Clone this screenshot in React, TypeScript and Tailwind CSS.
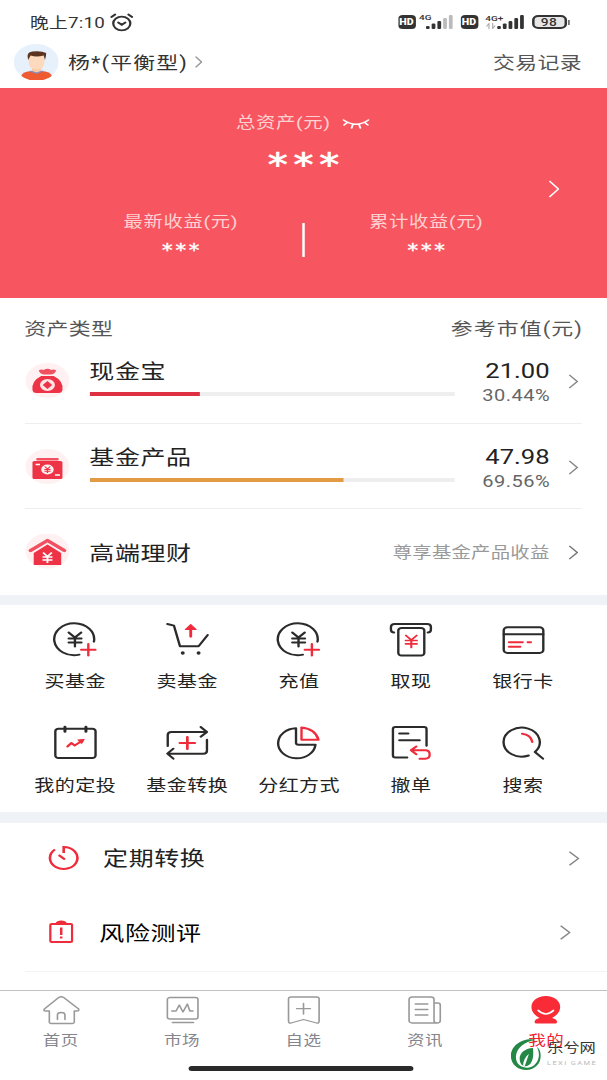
import type { ReactNode } from "react";

const DARK = "#2b2b2b";
const RED = "#ee2c3c";

export default function App() {
  return (
    <div className="h-[1080px] w-[607px] overflow-hidden bg-white">
      {/* 486pt wide phone layout, stretched to the full window */}
      <main className="flex h-[1080px] w-[486px] origin-left scale-x-[1.249] flex-col bg-white font-['Roboto','Noto_Sans_CJK_SC',sans-serif] text-[#222]">
        <StatusBar />
        <Header />
        <Summary />
        <Assets />
        <div className="h-[10px] shrink-0 bg-[#eff3f7]" />
        <section className="grid h-[207px] shrink-0 grid-cols-5 grid-rows-[103.5px_103.5px] pl-[15.5px] pr-[22.5px]">
          {actions.map((a) => (
            <div key={a.label} className="flex flex-col items-center pt-4">
              <svg viewBox="0 0 36 36" className="size-9" fill="none" stroke={DARK} strokeWidth="1.9" strokeLinecap="round" strokeLinejoin="round">
                {a.icon}
              </svg>
              <span className="mt-[13px] whitespace-nowrap text-[16px] leading-6 tracking-[0.4px]">{a.label}</span>
            </div>
          ))}
        </section>
        <div className="h-[11px] shrink-0 bg-[#eff3f7]" />
        <Services />
        <TabBar />
      </main>
    </div>
  );
}

function Chevron({ className }: { className: string }) {
  return (
    <svg viewBox="0 0 10 18" preserveAspectRatio="none" className={className} fill="none" stroke="currentColor">
      <path d="M1 1L9 9L1 17" strokeWidth="1.3" vectorEffect="non-scaling-stroke" />
    </svg>
  );
}

function Signal({ dim }: { dim: boolean }) {
  return (
    <svg viewBox="0 0 22 14" className="h-[14px] w-[22px]" fill="#333">
      <rect x="0" y="11" width="3" height="3" rx="1" />
      <rect x="4.6" y="8.5" width="3" height="5.5" rx="1" />
      <rect x="9.2" y="6" width="3" height="8" rx="1" />
      <rect x="13.8" y="3" width="3" height="11" rx="1" fill={dim ? "#bbb" : "#333"} />
      <rect x="18.4" y="0" width="3" height="14" rx="1" fill={dim ? "#bbb" : "#333"} />
    </svg>
  );
}

function HdBadge() {
  return (
    <span className="flex h-[14px] w-[14px] items-center justify-center rounded-[3.5px] bg-[#333] text-[8.5px] font-black leading-none text-white">
      HD
    </span>
  );
}

function StatusBar() {
  return (
    <div className="flex h-[44px] shrink-0 items-center pl-6 pr-[30px] text-[#333]">
      <span className="pt-[3px] text-[15px] tracking-[0.2px]">晚上7:10</span>
      <svg viewBox="0 0 20 20" className="ml-[4px] size-[19px]" fill="none" stroke="#333" strokeWidth="1.9" strokeLinecap="round">
        <circle cx="10" cy="11" r="7.2" />
        <path d="M1.3 4.2L4.4 1.6M18.7 4.2L15.6 1.6M7 10L10 12.4L13 10" />
      </svg>
      <div className="ml-auto flex items-center">
        <HdBadge />
        <span className="ml-[3px] -mt-[9px] text-[8px] font-medium leading-none">4G</span>
        <span className="-ml-[5px]"><Signal dim /></span>
        <span className="ml-[6px]"><HdBadge /></span>
        <span className="ml-[6px] flex h-[16px] w-[15px] flex-col text-[8px] font-medium leading-[9px]">
          4G+
          <svg viewBox="0 0 8 6" className="h-[6px] w-[8px]" fill="none" stroke="#aaa" strokeWidth="0.9">
            <path d="M2.500 6V.5L.5 3.500M5.500 0V5.500L7.500 2.500" />
          </svg>
        </span>
        <span className="-ml-[6px]"><Signal dim={false} /></span>
        <span className="ml-[6px] flex h-[14px] w-[28px] items-center justify-center rounded-[5px] border-2 border-[#333] bg-[#e6e6e6] text-[11px] font-medium leading-none tracking-[0.3px]">
          98
        </span>
        <span className="ml-px h-[5px] w-[1.5px] bg-[#333]" />
      </div>
    </div>
  );
}

function Header() {
  return (
    <header className="flex h-[44px] shrink-0 items-start pl-[10.5px] pr-5">
      <svg viewBox="0 0 36 36" className="size-9">
        <circle cx="18" cy="18" r="18" fill="#e7f1fb" />
        <path d="M6 32Q7 27.500 14.500 27H22Q29.500 27.500 30.500 32A18 18 0 0 1 6 32Z" fill="#ee5a32" />
        <path d="M14.500 23H22V27Q18.300 31 14.500 27Z" fill="#f7c9a9" />
        <path d="M13 27L18.200 29L23.500 27" fill="none" stroke="#7d8fc4" strokeWidth="1.200" />
        <path d="M12 11H24.500V18Q24.500 25.500 18.200 25.500T12 18Z" fill="#fdd9bd" />
        <path d="M11.500 16Q9.500 8 15 7.500Q22 6.500 26 9Q26 12 25 16L24 11.500Q18 13.500 13.500 11.500Z" fill="#5c3420" />
      </svg>
      <span className="ml-2 pt-px text-[17.500px] leading-9 tracking-[0.9px] text-[#333]">杨*(平衡型)</span>
      <Chevron className="ml-[6px] mt-3 h-[12px] w-[6px] text-[#999]" />
      <span className="ml-auto pt-px text-[17.500px] leading-9 tracking-[0.3px] text-[#555]">交易记录</span>
    </header>
  );
}

function Stars({ big }: { big?: boolean }) {
  return (
    <span
      className={
        big
          ? "-mr-[4.700px] block h-[20px] font-['DejaVu_Sans',sans-serif] text-[32px] leading-[22px] tracking-[4.700px] text-white [-webkit-text-stroke:0.7px_white]"
          : "-mr-[2.200px] block h-[12px] font-['DejaVu_Sans',sans-serif] text-[17px] leading-[17px] tracking-[2.200px] text-white [-webkit-text-stroke:0.4px_white]"
      }>
      ***
    </span>
  );
}

function Summary() {
  return (
    <section className="relative h-[210px] shrink-0 bg-[#f75660] text-[15.500px] tracking-[0.5px] text-[#ffd0d2]">
      <div className="flex h-6 items-center pl-[189px] pt-[24px] box-content">
        <span>总资产(元)</span>
        <svg viewBox="0 0 22 10" className="ml-[9px] h-[10px] w-[22px]" fill="none" stroke="#fff" strokeWidth="1.500" strokeLinecap="round">
          <path d="M1 1Q11 9.500 21 1M4 3.500L1.500 6M8.500 5.500L7.500 9M13.500 5.500L14.500 9M18 3.500L20.500 6" />
        </svg>
      </div>
      <div className="mt-[17px] flex justify-center">
        <Stars big />
      </div>
      <div className="mt-[37px] flex justify-center">
        <div className="flex w-[97px] flex-col items-center">
          <span className="whitespace-nowrap leading-6">最新收益(元)</span>
          <span className="mt-[8px]"><Stars /></span>
        </div>
        <span className="mx-[49px] mt-[13px] h-[34px] w-[1.500px] bg-white" />
        <div className="flex w-[97px] flex-col items-center">
          <span className="whitespace-nowrap leading-6">累计收益(元)</span>
          <span className="mt-[8px]"><Stars /></span>
        </div>
      </div>
      <Chevron className="absolute right-[38px] top-[92px] h-[18px] w-[9px] text-white" />
    </section>
  );
}

function Assets() {
  return (
    <section className="h-[297px] shrink-0 px-5">
      <div className="flex h-[40px] items-end justify-between pt-[2px] text-[17.500px] leading-[18px] text-[#555]">
        <span className="-ml-[0.5px] tracking-[0.3px]">资产类型</span>
        <span className="-mr-[0.800px] tracking-[0.900px]">参考市值(元)</span>
      </div>
      {assets.map((a) => (
        <div key={a.name} className="flex h-[85.500px] items-start border-b border-[#eeeeee] pt-[22px]">
          <svg viewBox="0 0 36 36" className="mt-[3px] size-9">{a.icon}</svg>
          <div className="ml-[15.500px] w-[292px]">
            <div className="text-[20px] leading-6 tracking-[0.5px]">{a.name}</div>
            <div className="mt-[8px] h-[4px] bg-[#eeeeee]">
              <div className={`h-full ${a.bar}`} style={{ width: a.percent }} />
            </div>
          </div>
          <div className="ml-auto text-right">
            <div className="text-[20.500px] leading-[23px]">{a.value}</div>
            <div className="-mr-[0.400px] text-[16px] leading-[26px] tracking-[0.400px] text-[#666]">{a.percent}</div>
          </div>
          <Chevron className="ml-[15px] mr-[3px] mt-[14px] h-[15px] w-[8px] text-[#888]" />
        </div>
      ))}
      <div className="flex h-[86px] items-center">
        <svg viewBox="0 0 36 36" className="size-9">
          <circle cx="18" cy="17" r="17.500" fill="#fff0f1" />
          <path d="M4.500 16.500L18 6.500L31.500 16.500" fill="none" stroke="#f0505f" strokeWidth="3.300" strokeLinecap="round" strokeLinejoin="round" />
          <path d="M7 19L18 10.500L29 19V31H7Z" fill="#ee3347" />
          <path d="M14.500 18.500L18 22.500L21.500 18.500M18 22.500V29M14 23H22M14 26H22" fill="none" stroke="#fff" strokeWidth="1.500" />
        </svg>
        <span className="ml-[15.500px] pt-[3px] text-[20px] tracking-[0.5px]">高端理财</span>
        <span className="ml-auto pt-[3px] text-[15.500px] tracking-[0.200px] text-[#999]">尊享基金产品收益</span>
        <Chevron className="ml-[15px] mr-[3px] h-[15px] w-[8px] text-[#777]" />
      </div>
    </section>
  );
}

function Services() {
  return (
    <section className="h-[167px] shrink-0 overflow-hidden">
      <div className="flex h-[70px] items-center pl-[37.500px] pr-[22px]">
        <svg viewBox="0 0 26 26" className="size-[26px]" fill="none" stroke={RED} strokeWidth="2.100">
          <path d="M6 4.500A11 11 0 1 0 13 2V8M9 10L14 14.500" />
        </svg>
        <span className="ml-[19px] pt-[2px] text-[20px] tracking-[0.5px]">定期转换</span>
        <Chevron className="ml-auto h-[15px] w-[9px] text-[#888]" />
      </div>
      <div className="ml-5 flex h-[79px] items-center border-b border-[#f3f3f3] pl-[19px] pr-[29px]">
        <svg viewBox="0 0 20 24" className="h-6 w-5" fill="none" stroke={RED} strokeWidth="1.800">
          <rect x="1.300" y="4" width="17.400" height="18" rx="1" />
          <path d="M6 4Q7 1.500 10 1.500T14 4Z" fill={RED} />
          <path d="M10 7.500V15M10 16.500V18.500" strokeWidth="2" />
        </svg>
        <span className="ml-[20.500px] pt-[3px] text-[20px] tracking-[0.5px] text-black">风险测评</span>
        <Chevron className="ml-auto h-[15px] w-[9px] text-[#888]" />
      </div>
    </section>
  );
}

function TabBar() {
  return (
    <nav className="relative h-[90px] shrink-0 border-t border-[#c2c2c2] bg-white">
      <div className="grid grid-cols-5">
        {tabs.map((t) => (
          <div key={t.label} className="flex flex-col items-center pt-1">
            <svg viewBox="0 0 30 30" className="size-[30px]" fill="none" stroke="#999" strokeWidth="1.300" strokeLinecap="round" strokeLinejoin="round">
              {t.icon}
            </svg>
            <span className={`mt-[5px] text-[14px] leading-5 tracking-[0.4px] ${t.active ? "text-[#f02233]" : "text-[#85858d]"}`}>
              {t.label}
            </span>
          </div>
        ))}
      </div>
      <div className="absolute left-[151px] top-[75px] h-[5px] w-[180px] rounded-full bg-[#2a2a2a]" />
      <Watermark />
    </nav>
  );
}

function Watermark() {
  return (
    <div className="absolute left-[409px] top-[48px] flex items-start">
      <svg viewBox="0 0 88 93" preserveAspectRatio="none" className="h-[31px] w-[24px]">
        <path d="M74 3C40-6 0 16 0 52C1 78 22 93 45 93C72 92 88 72 88 50C88 38 84 29 76 23C82 34 84 46 81 58C76 77 62 87 46 86C26 85 14 71 15 52C17 27 38 8 74 3Z" fill="#238845" />
        <path d="M65 27C41 28 24 43 26 62C27 73 32 80 41 82C60 82 69 60 65 27Z" fill="#238845" />
        <path d="M36 80C36 66 43 53 53 45C49 57 45 69 41 81" fill="#fff" />
      </svg>
      <div className="ml-[5px] whitespace-nowrap">
        <div className="text-[13px] leading-[18px] text-[#333]">乐兮网</div>
        <div className="mt-[2px] text-[6px] leading-[7px] tracking-[1.100px] text-[#bbb]">LEXI GAME</div>
      </div>
    </div>
  );
}

const coin: ReactNode = (
  <>
    <path d="M33.200 20.700A16 16 0 1 0 21.500 33.700" />
    <path d="M13 11.500L18 16.500L23 11.500M18 16.500V25.500M13 17.500H23.200M13 21.500H23.200" />
    <path d="M28.700 23V34.500M23 28.700H34.400" stroke={RED} />
  </>
);

const actions = [
  { label: "买基金", icon: coin },
  {
    label: "卖基金",
    icon: (
      <>
        <path d="M2 3L7.300 4.700L12.100 25.300H27L34.300 14" />
        <ellipse cx="14.300" cy="32" rx="1.600" ry="1.800" fill={DARK} stroke="none" />
        <ellipse cx="27" cy="32" rx="1.600" ry="1.800" fill={DARK} stroke="none" />
        <path d="M20.700 3.500L25 8.500H16.400Z" fill={RED} stroke={RED} strokeWidth="1" />
        <path d="M20.700 8V15.500" stroke={RED} strokeWidth="2.300" />
      </>
    ),
  },
  { label: "充值", icon: coin },
  {
    label: "取现",
    icon: (
      <>
        <path d="M4.500 11.500Q2 11.500 2 8.500V6Q2 3 5 3H31Q34 3 34 6V8.500Q34 11.500 31.500 11.500" />
        <rect x="7.900" y="7" width="20.800" height="27.500" rx="2.500" />
        <path d="M14 14.500L18.300 19L22.600 14.500M18.300 19V26.500M13.800 19.500H22.800M13.800 22.800H22.800" stroke={RED} strokeWidth="1.700" />
      </>
    ),
  },
  {
    label: "银行卡",
    icon: (
      <>
        <rect x="2.300" y="6.300" width="31.700" height="25.700" rx="3" />
        <path d="M2.300 13.300H34" />
        <path d="M6.500 21.300H17.500M21.500 21.300H24M6.500 25.700H15.500" stroke={RED} />
      </>
    ),
  },
  {
    label: "我的定投",
    icon: (
      <>
        <rect x="2.300" y="3.700" width="32.200" height="29.300" rx="2.500" />
        <path d="M10 2V6.500M26.800 2V6.500" strokeWidth="2.400" />
        <path d="M12 21.500L15.200 18L17.800 20.500L24 15.500" stroke={RED} />
        <path d="M20.500 15L25.500 14.300L23.500 18.500Z" fill={RED} stroke={RED} strokeWidth="0.800" />
      </>
    ),
  },
  {
    label: "基金转换",
    icon: (
      <>
        <path d="M2.300 21V10Q2.300 7 5.300 7H33.500M28.700 2L33.700 7L28.700 11.700" />
        <path d="M33.700 14.700V25.700Q33.700 28.700 30.700 28.700H2.300M6.800 23.700L2 28.700L6.800 33.700" />
        <path d="M18 12V24M12 18H24" stroke={RED} strokeWidth="2.200" />
      </>
    ),
  },
  {
    label: "分红方式",
    icon: (
      <>
        <path d="M16 3.300A15 15 0 1 0 31.600 19.700H18Q16 19.700 16 17.700Z" />
        <path d="M20.400 2.500V14.700H34Q31.500 4 20.400 2.500Z" stroke={RED} />
      </>
    ),
  },
  {
    label: "撤单",
    icon: (
      <>
        <path d="M15 32.500H5.600Q3.600 32.500 3.600 30.500V4Q3.600 2 5.600 2H28.500Q30.500 2 30.500 4V20.700" />
        <path d="M8.700 8.500H15.900M8.700 15.300H25" />
        <path d="M22.300 21.500L18 25.300L22.300 29.300M18 25.300H29.500Q33 25.300 33 29.500T29.500 33.700H25" stroke={RED} />
      </>
    ),
  },
  {
    label: "搜索",
    icon: (
      <>
        <path d="M22.300 30.500A14.500 14.500 0 1 1 27.300 27L33.700 33.700" />
        <path d="M17 8.700Q24 9.500 25.200 17" stroke={RED} />
      </>
    ),
  },
];

const assets = [
  {
    name: "现金宝",
    value: "21.00",
    percent: "30.44%",
    bar: "bg-[#df2f42]",
    icon: (
      <>
        <circle cx="18" cy="17.500" r="17.500" fill="#fff0f1" />
        <path d="M11 7.500Q13 6 15 7Q18 4.500 21 7Q23 6 25 7.500Q24 11 21 11.500H15Q12 11 11 7.500Z" fill="#f0505f" />
        <path d="M13 13H23Q31 18 30 27Q29.500 30 27 30H9Q6.500 30 6 27Q5 18 13 13Z" fill="#ee3347" />
        <circle cx="18" cy="22" r="5" fill="#ffe5e5" stroke="#ffe5e5" strokeWidth="2" />
        <path d="M18 18L21.800 22L18 26L14.200 22Z" fill="#ee3347" />
      </>
    ),
  },
  {
    name: "基金产品",
    value: "47.98",
    percent: "69.56%",
    bar: "bg-[#e29b42]",
    icon: (
      <>
        <circle cx="18" cy="17.500" r="17.500" fill="#fff0f1" />
        <rect x="9" y="9" width="18" height="2.500" rx="1" fill="#f0505f" />
        <rect x="6" y="12" width="24" height="18" rx="1.500" fill="#ee3347" />
        <path d="M8.500 15.500H12M24 26H28" stroke="#fff" strokeWidth="1.500" />
        <circle cx="18" cy="20.500" r="5" fill="#fff0ef" />
        <path d="M15.800 17.500L18 20L20.200 17.500M18 20V24M15.500 20.500H20.500M15.500 22.300H20.500" fill="none" stroke="#ee3347" strokeWidth="1.100" />
      </>
    ),
  },
];

const tabs = [
  {
    label: "首页",
    icon: (
      <>
        <path d="M13 2.500Q15 1 17 2.500L29 14Q29.500 16 27.500 16H25.500V27Q25.500 28.500 24 28.500H7Q5.500 28.500 5.500 27V16H2.500Q.5 16 1.500 14Z" />
        <path d="M12 24.500V20Q12 17.500 15 17.500T18 20V24.500" />
      </>
    ),
  },
  {
    label: "市场",
    icon: (
      <>
        <rect x="3" y="2.500" width="24.500" height="21.500" rx="2" />
        <path d="M6.500 16H10L12.500 10L15.500 17L19 9L21 16H23.500M7 27.500H24" />
      </>
    ),
  },
  {
    label: "自选",
    icon: (
      <>
        <path d="M5 2H25.500Q27.500 2 27.500 4V26Q27.500 28.500 25.500 28L15 24.500L5 28Q3 28.500 3 26V4Q3 2 5 2Z" />
        <path d="M15 8.500V19M9.500 13.700H20.500" />
      </>
    ),
  },
  {
    label: "资讯",
    icon: (
      <>
        <path d="M22.500 8H25.500Q27.500 8 27.500 10V25.500Q27.500 28 25 28H5Q2.500 28 2.500 25.500V4.500Q2.500 2 5 2H20Q22.500 2 22.500 4.500V25.500Q22.500 28 25 28M7.500 9H17.500M7.500 14.500H17.500M7.500 20H17.500" />
      </>
    ),
  },
  {
    label: "我的",
    active: true,
    icon: (
      <>
        <path d="M15 1C22 1 26.500 6 26.500 12C26.500 17 23.500 20.500 20 23Q24 24 24 27Q24 28.500 22.500 28.500H7.500Q6 28.500 6 27Q6 24 10 23C6.500 20.500 3.500 17 3.500 12C3.500 6 8 1 15 1Z" fill="#f92b36" stroke="none" />
        <path d="M9 15.500Q15 22.500 21 15.500" stroke="#fff" strokeWidth="1.700" />
      </>
    ),
  },
];
